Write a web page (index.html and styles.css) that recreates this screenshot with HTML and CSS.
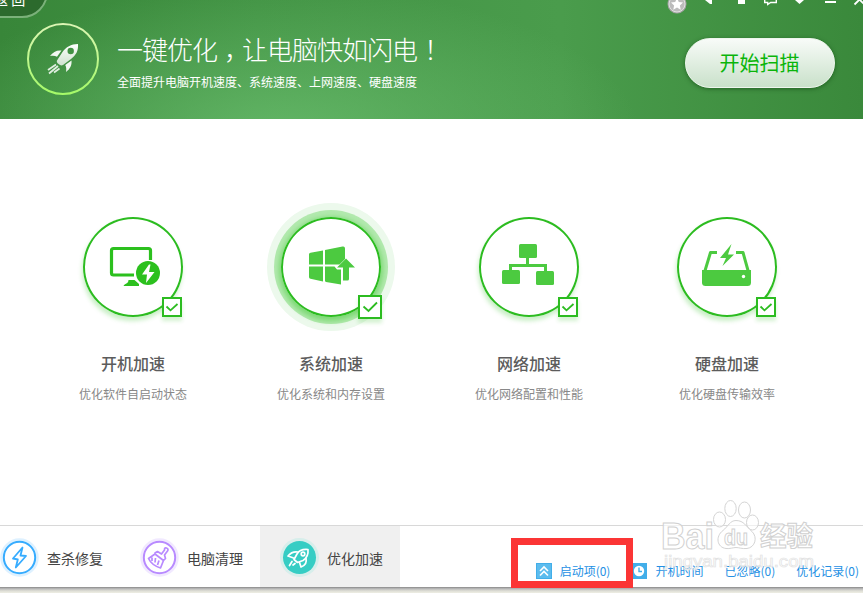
FILE: index.html
```html
<!DOCTYPE html>
<html lang="zh-CN">
<head>
<meta charset="UTF-8">
<title>优化加速</title>
<link rel="stylesheet" href="styles.css">
</head>
<body>
<div class="window">
	<div class="header">
		<div class="back">返 回</div>
		<svg class="winbtns" width="200" height="16" viewBox="663 0 200 16">
			<circle cx="677" cy="4" r="9.5" fill="#a5a5a5"/>
			<circle cx="677" cy="4" r="8" fill="#bcbcbc" stroke="#e2e2e2" stroke-width="1"/>
			<path d="M677 -2l1.8 4 4.2.5-3.1 2.900.8 4.300-3.700-2.200-3.700 2.200.8-4.300-3.100-2.900 4.200-.5z" fill="#fff"/>
			<path d="M705 0h7v4h-2z" fill="#fff"/>
			<path d="M738 0h7v4h-7z" fill="#fff"/>
			<path d="M764.700 0v2.500h3v2l3-2h5.600V0" fill="none" stroke="#fff" stroke-width="1.400"/>
			<path d="M795 0h9l-4.500 4z" fill="#fff"/>
			<path d="M825 1h11v2h-11z" fill="#fff"/>
			<path d="M854.500 4.500l5-5 5 5" fill="none" stroke="#fff" stroke-width="1.800"/>
		</svg>
		<svg class="logo" width="72" height="72" viewBox="0 0 72 72">
			<defs>
				<linearGradient id="ring" x1="0" y1="0" x2="0" y2="1">
					<stop offset="0" stop-color="#dcf5b4"/>
					<stop offset="1" stop-color="#a5fa68"/>
				</linearGradient>
				<linearGradient id="metal" x1="0" y1="0" x2="0" y2="1">
					<stop offset="0" stop-color="#fff"/>
					<stop offset="1" stop-color="#cfe3cf"/>
				</linearGradient>
			</defs>
			<circle cx="36" cy="36" r="35" fill="none" stroke="url(#ring)" stroke-width="2"/>
			<path fill="url(#metal)" fill-rule="evenodd" d="M51 21C44 21 39 24 35.500 29L30 37.500c-.5 1 0 2 .6 2.700L33 42c1 .7 2 .6 3 0l8-6c5-4 7.500-8 7-15zM43.700 24.800a3.200 3.200 0 1 1 0 6.400 3.200 3.200 0 0 1 0-6.400z"/>
			<path fill="#f1f8f1" d="M34.500 27.500c-5-.5-8.500 1.500-11.500 5.500 3-.5 5-.4 7 .8zM44.500 37.500c.5 5-1.500 8.500-5.500 11.500.5-3 .4-5-.8-7z"/>
			<path d="M29 41.500l-8 5.500M31 43l-9 7.500M32.500 45.500l-5.500 4" stroke="#e0eee0" stroke-width="1.800" fill="none"/>
		</svg>
		<div class="slogan">
			<div class="title">一键优化<span class="comma">，</span>让电脑快如闪电<span class="bang">！</span></div>
			<div class="subtitle">全面提升电脑开机速度、系统速度、上网速度、硬盘速度</div>
		</div>
		<button class="scan">开始扫描</button>
	</div>

	<div class="features">
		<div class="feature">
			<div class="circle">
				<svg width="100" height="100" viewBox="0 0 100 100">
					<path d="M67.500 43V33.500a2 2 0 0 0-2-2H30.500a2 2 0 0 0-2 2V56a2 2 0 0 0 2 2H51" fill="none" stroke="#2cc01e" stroke-width="3.200"/>
					<path d="M45.500 63h6l4.500 4V69H40.500c1-2.500 5-2 5-6z" fill="#2cc01e"/>
					<circle cx="65" cy="56" r="12" fill="#2cc01e"/>
					<path d="M66 47.500l-7 10h5l-1 8.500 8.500-11h-5.500l1.500-7.500z" fill="#fff"/>
				</svg>
				<div class="check"><svg width="14" height="14" viewBox="0 0 14 14"><path d="M1.500 6.500l4 3.800L12.500 4"/></svg></div>
			</div>
			<div class="name">开机加速</div>
			<div class="desc">优化软件自启动状态</div>
		</div>
		<div class="feature">
			<div class="circle active">
				<svg width="100" height="100" viewBox="0 0 100 100" fill="#4cca40">
					<path d="M28 37.500q0-1.500 1.500-1.800L42 33.500V47.500H28zM44 33l17.500-3.500q2.500-.5 2.500 2V42l-5.500 5.500H44zM28 49.500H42V64.500L29.500 61.800q-1.500-.3-1.500-1.800zM44 49.500H53.500l2.500 3h4v15L45 65q-1-.2-1-1.500z"/>
					<path d="M65 41.500l9 9H68V62q0 1.500-1.500 1.500H62V50.500H56z"/>
				</svg>
				<div class="check"><svg width="18" height="18" viewBox="0 0 18 18"><path d="M2.500 8.500l5 4.500L16 4.500"/></svg></div>
			</div>
			<div class="name">系统加速</div>
			<div class="desc">优化系统和内存设置</div>
		</div>
		<div class="feature">
			<div class="circle">
				<svg width="100" height="100" viewBox="0 0 100 100" fill="#4cca40">
					<rect x="40" y="27" width="18" height="14" rx="1.500"/>
					<rect x="23" y="53" width="18" height="14" rx="1.500"/>
					<rect x="57" y="54" width="18" height="14" rx="1.500"/>
					<path d="M47 41h3v6h18v8h-3v-5H33v5h-3v-8h17z"/>
				</svg>
				<div class="check"><svg width="14" height="14" viewBox="0 0 14 14"><path d="M1.500 6.500l4 3.800L12.500 4"/></svg></div>
			</div>
			<div class="name">网络加速</div>
			<div class="desc">优化网络配置和性能</div>
		</div>
		<div class="feature">
			<div class="circle">
				<svg width="100" height="100" viewBox="0 0 100 100">
					<path d="M40 35.500h-6.500L27 57M59 35.500h7L72 57" fill="none" stroke="#4cca40" stroke-width="3" stroke-linejoin="round"/>
					<path d="M25 53h49v12.500q0 3.500-3.500 3.500H28.500q-3.500 0-3.500-3.500z" fill="#4cca40"/>
					<circle cx="66.500" cy="59.500" r="1.700" fill="#fff"/>
					<path d="M54.500 27L43 41h6l-3.500 8L57 37.500h-6z" fill="#4cca40"/>
				</svg>
				<div class="check"><svg width="14" height="14" viewBox="0 0 14 14"><path d="M1.500 6.500l4 3.800L12.500 4"/></svg></div>
			</div>
			<div class="name">硬盘加速</div>
			<div class="desc">优化硬盘传输效率</div>
		</div>
	</div>

	<div class="footer">
		<div class="tabs">
			<div class="tab">
				<svg width="38" height="38" viewBox="0 0 38 38">
					<circle cx="19.500" cy="18.500" r="18" fill="#fff" stroke="#def1ff" stroke-width="2.500"/>
					<circle cx="19.500" cy="18.500" r="15.700" fill="none" stroke="#36acff" stroke-width="2"/>
					<path d="M22.500 8.500L13 19.500l4.800 1-2 8L26 17l-5.500-.5z" fill="none" stroke="#36acff" stroke-width="1.800" stroke-linejoin="round"/>
				</svg>
				<span>查杀修复</span>
			</div>
			<div class="tab">
				<svg width="38" height="38" viewBox="0 0 38 38">
					<circle cx="19.500" cy="18.500" r="18" fill="#fff" stroke="#f1e9ff" stroke-width="2.500"/>
					<circle cx="19.500" cy="18.500" r="15.700" fill="none" stroke="#b88aff" stroke-width="2"/>
					<path d="M15 14l2.500-1.500 4 2.500 3-4q-.2-2.800 2-2t1.200 2.800l-3.200 4.200 1 3.500-2 2-8.500-6.500zM15 15l-6.500 4.500q3 6.500 12 9.500l3-7.500M12 18.500v3.500M15.500 19l-.5 4.500M19 21.500L17.500 26" fill="none" stroke="#b88aff" stroke-width="1.700" stroke-linejoin="round"/>
				</svg>
				<span>电脑清理</span>
			</div>
			<div class="tab selected">
				<svg width="38" height="38" viewBox="0 0 38 38">
					<circle cx="19.500" cy="18.500" r="19.500" fill="#d7eeeb"/>
					<circle cx="19.500" cy="18.500" r="16.500" fill="#36cdc4"/>
					<g fill="none" stroke="#fff" stroke-width="1.700" stroke-linejoin="round" stroke-linecap="round">
						<path d="M28 10.500c-5-.5-9 1-11 4.500L14 20.500l3.500 3 5.500-2c4-2.500 5.500-6 5-11z"/>
						<circle cx="23" cy="15" r="1.800"/>
						<path d="M17.500 13c-4-.5-7 1-9.500 4l5.500 2M26 19.500c1 4-1 7-5 8.500L19.500 23.500M12 22.500l-2.500 4M15 24.500l-2 1.500"/>
					</g>
				</svg>
				<span>优化加速</span>
			</div>
		</div>
		<div class="links">
			<a class="link first"><svg width="16" height="16" viewBox="0 0 16 16"><rect width="16" height="16" fill="#42aee9"/><rect x="1" y="1" width="14" height="14" fill="#5cbcee"/><path d="M4 8l4-4 4 4M4 12.500l4-4 4 4" fill="none" stroke="#fff" stroke-width="1.600"/></svg><span>启动项(0)</span></a>
			<a class="link second"><svg width="16" height="16" viewBox="0 0 16 16"><rect width="16" height="16" fill="#42aee9"/><circle cx="8" cy="8" r="5.200" fill="#fff"/><path d="M8 4.500V8.500h3" fill="none" stroke="#42aee9" stroke-width="1.400"/></svg><span>开机时间</span></a>
			<a class="link third">已忽略(0)</a>
			<a class="link">优化记录(0)</a>
		</div>
	</div>
</div>
<div class="desktop"></div>
<div class="marker"></div>
<svg class="watermark" width="160" height="75" viewBox="658 497 160 75">
	<g class="wm-shape">
		<ellipse cx="719.500" cy="519.500" rx="6" ry="7.500"/>
		<ellipse cx="730.500" cy="508.500" rx="5.700" ry="8"/>
		<ellipse cx="744.500" cy="510" rx="6" ry="8"/>
		<ellipse cx="752.500" cy="522.500" rx="6" ry="7.500"/>
		<path d="M736 520.500c-6 0-8 6-13 10-8 6-6 17 3 18 4 .5 7-1 10-1s6 1.500 11 1c8-1 11-11 5-17-6-5-8-11-16-11z"/>
	</g>
	<text class="wm-bold" x="661" y="549" font-size="36" textLength="53" lengthAdjust="spacingAndGlyphs">Bai</text>
	<text class="wm-bold" x="724" y="545" font-size="22" textLength="24" lengthAdjust="spacingAndGlyphs">du</text>
	<text class="wm-bold" x="760" y="546" font-size="27" textLength="53" lengthAdjust="spacingAndGlyphs">经验</text>
	<text class="wm-url" x="664" y="567" font-size="17" textLength="150" lengthAdjust="spacingAndGlyphs">jingyan.baidu.com</text>
</svg>
</body>
</html>
```

FILE: styles.css
```css
body{
	margin:0;
	width:863px;
	height:593px;
	overflow:hidden;
	position:relative;
	background-color:#fff;
	font-family:"Noto Sans CJK SC","Liberation Sans",sans-serif;
}
svg{
	display:block;
	flex:none;
}
.window{
	display:flex;
	flex-direction:column;
	height:587px;
}
.header{
	position:relative;
	display:flex;
	height:119px;
	box-sizing:border-box;
	padding:23px 28px 0 27px;
	overflow:hidden;
	background:
		radial-gradient(ellipse 360px 150px at 280px 135px, rgba(112,196,116,0.7), rgba(112,196,116,0) 100%),
		linear-gradient(90deg, #388639 0%, #429344 30%, #4a9c4c 65%, #3a893b 100%);
}
.back{
	position:absolute;
	left:-32px;
	top:-21px;
	width:76px;
	height:35px;
	border:2px solid #7bb17a;
	border-radius:0 0 26px 0;
	background-color:#2c6a2d;
	color:#fff;
	font-size:14px;
	line-height:36px;
	text-indent:24px;
	white-space:nowrap;
}
.winbtns{
	position:absolute;
	right:0;
	top:0;
}
.slogan{
	flex:1;
	margin-left:18px;
	color:#fff;
	white-space:nowrap;
}
.title{
	margin-top:8px;
	font-size:26px;
	font-weight:300;
	line-height:36px;
	letter-spacing:-1px;
}
.comma{
	margin:0 -7px 0 7px;
}
.bang{
	margin:0 -7px 0 7px;
}
.subtitle{
	margin-top:6px;
	font-size:12px;
	line-height:18px;
}
.scan{
	width:150px;
	height:50px;
	margin-top:15px;
	padding:0 1px 0 0;
	border:1px solid #eef6ee;
	border-radius:25px;
	background:linear-gradient(#f8fbf8, #c9e1ca);
	box-shadow:0 1px 4px rgba(20,70,20,0.6);
	color:#0ab50a;
	font-family:inherit;
	font-size:20px;
	line-height:48px;
}
.features{
	flex:1;
	display:grid;
	grid-template-columns:repeat(4, 198px);
	padding:98px 0 0 34px;
	text-align:center;
}
.circle{
	position:relative;
	width:100px;
	height:100px;
	margin:0 auto;
	border-radius:50%;
	box-shadow:inset 0 0 0 2px #2cbc20, -1px 4px 4px rgba(44,192,30,0.25);
}
.circle.active{
	box-shadow:inset 0 0 0 2px #2cbc20, 0 2px 5px 2px rgba(44,192,30,0.4), 0 0 0 7px #b2e9ae, 0 0 0 14px #ecf9ec;
}
.check{
	position:absolute;
	left:79px;
	top:80px;
	display:flex;
	align-items:center;
	justify-content:center;
	width:16px;
	height:16px;
	border:2px solid #2cbc20;
	background-color:#fff;
	box-shadow:0 4px 4px rgba(44,192,30,0.2);
}
.active .check{
	left:77px;
	top:78px;
	width:20px;
	height:20px;
}
.check path{
	fill:none;
	stroke:#2cbc20;
	stroke-width:1.8;
}
.name{
	margin-top:34px;
	color:#5c5c5c;
	font-size:16px;
	font-weight:500;
	line-height:24px;
}
.desc{
	margin-top:10px;
	color:#888;
	font-size:12px;
	line-height:18px;
}
.footer{
	display:flex;
	justify-content:space-between;
	height:61px;
	border-top:1px solid #d8d8d8;
}
.tabs{
	display:flex;
	margin-left:-20px;
}
.tab{
	display:flex;
	align-items:center;
	gap:9px;
	width:120px;
	padding:2px 0 0 20px;
	color:#444;
	font-size:14px;
	white-space:nowrap;
}
.tab svg{
	overflow:visible;
}
.tab.selected{
	background-color:#f0f0f0;
}
.links{
	display:flex;
	align-items:center;
	padding:28px 4px 0 0;
	color:#2590e4;
	font-size:12px;
	white-space:nowrap;
}
.link{
	display:flex;
	align-items:center;
	gap:8px;
}
.first{
	margin-right:21px;
}
.second{
	margin-right:21px;
}
.third{
	margin-right:21px;
}
.desktop{
	height:6px;
	background:linear-gradient(#888 0, #bbb 30%, #deded6 65%, #eeeee4 100%);
}
.marker{
	position:absolute;
	left:511px;
	top:538px;
	width:108px;
	height:36px;
	border:7px solid #fb3535;
}
.watermark{
	position:absolute;
	left:658px;
	top:497px;
}
.wm-shape{
	fill:#fff;
	fill-opacity:0.6;
	stroke:#d4d4d4;
	stroke-width:1;
}
.wm-bold{
	font-family:"Liberation Sans","Noto Sans CJK SC",sans-serif;
	font-weight:bold;
	fill:#fff;
	fill-opacity:0.7;
	stroke:#d0d0d0;
	stroke-width:1;
}
.wm-url{
	font-family:"Liberation Sans",sans-serif;
	fill:#fff;
	fill-opacity:0.6;
	stroke:#e2e2e2;
	stroke-width:0.7;
}
```
